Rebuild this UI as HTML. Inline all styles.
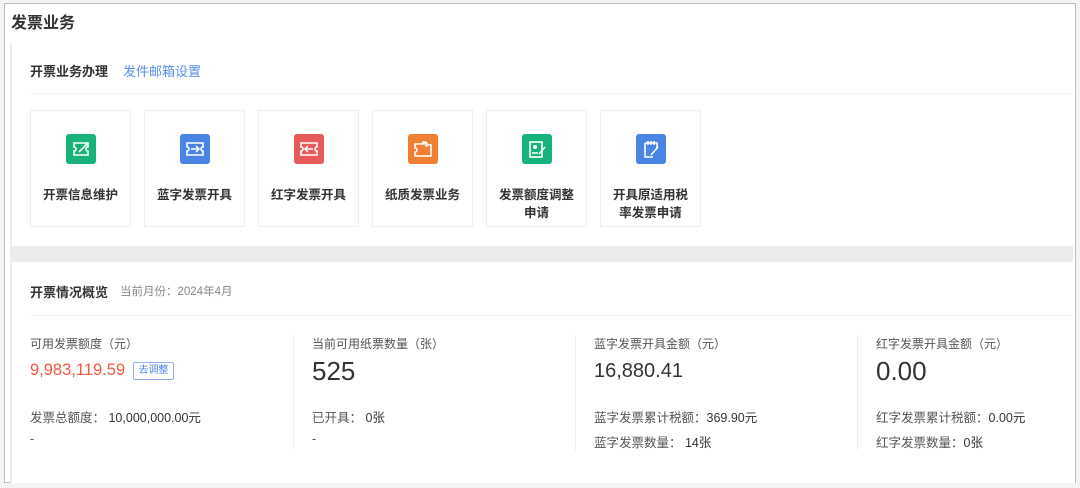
<!DOCTYPE html><html><head><meta charset="utf-8"><style>
*{margin:0;padding:0;box-sizing:border-box}
body{width:1080px;height:488px;background:#f4f4f4;font-family:"Liberation Sans","Noto Sans CJK SC",sans-serif;color:#333;position:relative;overflow:hidden}
.a{position:absolute;white-space:nowrap}
.frame{position:absolute;left:4px;top:3px;width:1072px;height:480px;border:1px solid #bdbdbd;background:#fff}
.card{position:absolute;top:110px;width:101px;height:117px;border:1px solid #eee;background:#fff}
.card .ic{position:absolute;left:35px;top:23px;width:30px;height:30px;border-radius:3px}
.card .t{position:absolute;left:0;right:0;top:75px;text-align:center;font-size:12.5px;font-weight:bold;color:#333;line-height:18px}
.lab{font-size:12px;color:#555}
.row{font-size:12.5px;color:#555}
.row b{font-weight:normal;color:#333}
.vl{position:absolute;top:335px;width:1px;height:115px;background:#eee}
</style></head><body>
<div class="frame"></div>
<div class="a" style="left:10px;top:43px;width:1065px;height:440px;background:#fff;border-left:2px solid #ececec"></div>
<div class="a" style="left:11px;top:9px;font-size:16px;font-weight:bold;color:#333">发票业务</div>
<div class="a" style="left:30px;top:61px;font-size:13px;font-weight:bold;color:#333">开票业务办理</div>
<div class="a" style="left:123px;top:61px;font-size:13px;color:#5b8ef0">发件邮箱设置</div>
<div class="a" style="left:30px;top:93px;width:1043px;height:1px;background:#f0f0f0"></div>

<div class="card" style="left:30px"><div class="ic" style="background:#17b37b"><svg width="30" height="30"><path d="M8 9h14v4a2 2 0 0 0 0 4v4H8v-4a2 2 0 0 0 0-4z" fill="none" stroke="#fff" stroke-width="1.6"/><path d="M13 18l8-8" stroke="#fff" stroke-width="1.6"/></svg></div><div class="t">开票信息维护</div></div>
<div class="card" style="left:144px"><div class="ic" style="background:#4a85e6"><svg width="30" height="30"><path d="M7 9h16v4a2 2 0 0 0 0 4v4H7v-4a2 2 0 0 0 0-4z" fill="none" stroke="#fff" stroke-width="1.6"/><path d="M11 15h8M16 12l3 3-3 3" fill="none" stroke="#fff" stroke-width="1.5"/></svg></div><div class="t">蓝字发票开具</div></div>
<div class="card" style="left:258px"><div class="ic" style="background:#e65a5a"><svg width="30" height="30"><path d="M7 9h16v4a2 2 0 0 0 0 4v4H7v-4a2 2 0 0 0 0-4z" fill="none" stroke="#fff" stroke-width="1.6"/><path d="M19 15h-8M14 12l-3 3 3 3" fill="none" stroke="#fff" stroke-width="1.5"/></svg></div><div class="t">红字发票开具</div></div>
<div class="card" style="left:372px"><div class="ic" style="background:#f07f34"><svg width="30" height="30"><path d="M7 10h8v-2h3l2 3h3v11H7v-4a2 2 0 0 0 0-4z" fill="none" stroke="#fff" stroke-width="1.6"/><path d="M16 8l3 5" stroke="#fff" stroke-width="1.6"/></svg></div><div class="t">纸质发票业务</div></div>
<div class="card" style="left:486px"><div class="ic" style="background:#17b37b"><svg width="30" height="30"><rect x="8" y="8" width="12" height="15" fill="none" stroke="#fff" stroke-width="1.6"/><circle cx="13" cy="13" r="2" fill="#fff"/><path d="M10 19h6M17 20l6-7" stroke="#fff" stroke-width="1.6"/></svg></div><div class="t">发票额度调整<br>申请</div></div>
<div class="card" style="left:600px"><div class="ic" style="background:#4a85e6"><svg width="30" height="30"><path d="M9 9h12v5M9 9v14h8" fill="none" stroke="#fff" stroke-width="1.6"/><path d="M12 7v4M15 7v4M18 7v4M15 21l7-8" stroke="#fff" stroke-width="1.6"/></svg></div><div class="t">开具原适用税<br>率发票申请</div></div>

<div class="a" style="left:12px;top:246px;width:1061px;height:16px;background:#ececec"></div>
<div class="a" style="left:30px;top:282px;font-size:13px;font-weight:bold;color:#333">开票情况概览</div>
<div class="a" style="left:120px;top:283px;font-size:11.5px;color:#888">当前月份：2024年4月</div>
<div class="a" style="left:30px;top:315px;width:1043px;height:1px;background:#f0f0f0"></div>

<div class="vl" style="left:293px"></div><div class="vl" style="left:575px"></div><div class="vl" style="left:857px"></div>

<div class="a lab" style="left:30px;top:335px">可用发票额度（元）</div>
<div class="a" style="left:30px;top:361px;font-size:16.5px;color:#f2583e">9,983,119.59</div>
<div class="a" style="left:133px;top:362px;width:41px;height:18px;border:1px solid #8fb1f0;border-radius:2px;font-size:10px;color:#4a85e6;text-align:center;line-height:16px">去调整</div>
<div class="a row" style="left:30px;top:407px">发票总额度：&nbsp;<b>10,000,000.00元</b></div>
<div class="a row" style="left:30px;top:432px">-</div>

<div class="a lab" style="left:312px;top:335px">当前可用纸票数量（张）</div>
<div class="a" style="left:312px;top:356px;font-size:26px;color:#333">525</div>
<div class="a row" style="left:312px;top:407px">已开具：&nbsp;<b>0张</b></div>
<div class="a row" style="left:312px;top:432px">-</div>

<div class="a lab" style="left:594px;top:335px">蓝字发票开具金额（元）</div>
<div class="a" style="left:594px;top:360px;font-size:20px;color:#333">16,880.41</div>
<div class="a row" style="left:594px;top:407px">蓝字发票累计税额：<b>369.90元</b></div>
<div class="a row" style="left:594px;top:432px">蓝字发票数量：&nbsp;<b>14张</b></div>

<div class="a lab" style="left:876px;top:335px">红字发票开具金额（元）</div>
<div class="a" style="left:876px;top:356px;font-size:26px;color:#333">0.00</div>
<div class="a row" style="left:876px;top:407px">红字发票累计税额：<b>0.00元</b></div>
<div class="a row" style="left:876px;top:432px">红字发票数量：<b>0张</b></div>
</body></html>
